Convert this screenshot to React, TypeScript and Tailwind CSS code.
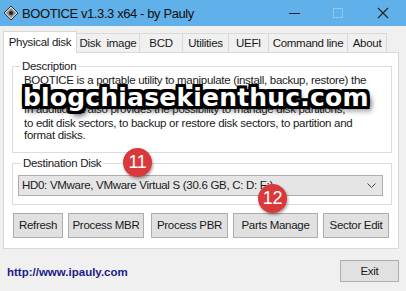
import React from 'react';

const tabs = [
  { label: 'Physical disk', w: 'w-[74px]' },
  { label: 'Disk  image', w: 'w-[64px]' },
  { label: 'BCD', w: 'w-[44px]' },
  { label: 'Utilities', w: 'w-[47px]' },
  { label: 'UEFI', w: 'w-[41px]' },
  { label: 'Command line', w: 'w-[80px]' },
  { label: 'About', w: 'w-[40px]' },
];

const buttons = [
  { label: 'Refresh', w: 'w-[50px]', ml: 'ml-0' },
  { label: 'Process MBR', w: 'w-[76px]', ml: 'ml-[5px]' },
  { label: 'Process PBR', w: 'w-[77px]', ml: 'ml-[7px]' },
  { label: 'Parts Manage', w: 'w-[85px]', ml: 'ml-[5px]' },
  { label: 'Sector Edit', w: 'w-[66px]', ml: 'ml-[5px]' },
];

function AppIcon() {
  return (
    <svg width="16" height="16" viewBox="0 0 16 16">
      <path d="M8 1 L15 8 L8 15 L1 8 Z" fill="#d8d8d8" stroke="#333" strokeWidth="1" />
      <path d="M8 3 L13 8 L8 13 L3 8 Z" fill="#8a8a8a" />
      <circle cx="8" cy="8" r="2" fill="#222" />
    </svg>
  );
}

function Badge({ n, className }: { n: string; className: string }) {
  return (
    <div
      className={`absolute flex h-[29px] w-[29px] items-center justify-center rounded-full bg-[#d9393b] font-['Liberation_Sans',sans-serif] text-[18px] text-white shadow-[1px_2px_3px_rgba(0,0,0,0.35)] ${className}`}
    >
      {n}
    </div>
  );
}

export default function App() {
  return (
    <div className="relative h-[291px] w-[406px] overflow-hidden bg-[#f0f0f0] font-['Liberation_Sans',sans-serif] text-[11.5px] leading-[13px] tracking-[-0.3px] text-[#1a1a1a]">
      {/* title bar */}
      <div className="flex h-[26px] items-center bg-[#60b0e9] pl-[3px]">
        <AppIcon />
        <span className="ml-[3px] text-[13px] tracking-[-0.4px] text-[#111]">BOOTICE v1.3.3 x64 - by Pauly</span>
        <div className="ml-auto flex h-full items-center">
          <div className="flex w-[44px] justify-center">
            <div className="h-px w-[11px] bg-[#222]" />
          </div>
          <div className="flex w-[44px] justify-center">
            <div className="h-[10px] w-[10px] border border-[#95c5e8]" />
          </div>
          <div className="flex w-[46px] justify-center">
            <svg width="12" height="12" viewBox="0 0 12 12">
              <path d="M1 1 L11 11 M11 1 L1 11" stroke="#222" strokeWidth="1.1" />
            </svg>
          </div>
        </div>
      </div>

      <div className="px-[3px]">
        {/* tabs */}
        <div className="mt-[5px] flex h-[21px] items-end">
          {tabs.map((t, i) =>
            i === 0 ? (
              <div
                key={t.label}
                className={`relative z-10 -mb-px flex h-[22px] items-center justify-center border border-b-0 border-[#d9d9d9] bg-white ${t.w}`}
              >
                {t.label}
              </div>
            ) : (
              <div
                key={t.label}
                className={`-ml-px flex h-[19px] items-center justify-center whitespace-pre border border-b-0 border-[#d9d9d9] bg-[#f0f0f0] ${t.w}`}
              >
                {t.label}
              </div>
            ),
          )}
        </div>

        {/* panel */}
        <div className="h-[197px] w-[396px] border border-[#d9d9d9] bg-white pl-[8px] pr-[6px] pt-[7px]">
          <fieldset className="h-[93px] border border-[#dcdcdc] pl-[11px] pr-[6px]">
            <legend className="-ml-[4px] px-[2px]">Description</legend>
            <p>
              <span className="block leading-[14.5px]">
                BOOTICE is a portable utility to manipulate (install, backup, restore) the
              </span>
              <span className="block leading-[14.5px]">MBR/PBR of local disks and USB disks.</span>
              <span className="block leading-[14.5px]">
                In addition, it also provides the possibility to manage disk partitions,
              </span>
              <span className="block leading-[12.7px]">
                to edit disk sectors, to backup or restore disk sectors, to partition and
              </span>
              <span className="block leading-[12.7px]">format disks.</span>
            </p>
          </fieldset>

          <fieldset className="mt-[4px] h-[48px] border border-[#dcdcdc] pl-[5px] pr-[8px]">
            <legend className="ml-[3px] px-[2px]">Destination Disk</legend>
            <div className="mt-[5px] flex h-[21px] items-center border border-[#adadad] bg-[#e5e5e5] pl-[3px] pr-[6px]">
              <span>HD0: VMware, VMware Virtual S (30.6 GB, C: D: F:)</span>
              <svg className="ml-auto" width="9" height="6" viewBox="0 0 9 6">
                <path d="M0.5 0.5 L4.5 4.5 L8.5 0.5" fill="none" stroke="#444" strokeWidth="1" />
              </svg>
            </div>
          </fieldset>

          <div className="mt-[8px] flex pl-[1px]">
            {buttons.map((b) => (
              <div
                key={b.label}
                className={`flex h-[25px] items-center justify-center border border-[#adadad] bg-[#e1e1e1] ${b.w} ${b.ml}`}
              >
                {b.label}
              </div>
            ))}
          </div>
        </div>

        {/* footer */}
        <div className="mt-[11px] flex items-center">
          <a className="ml-[4px] mt-[2px] text-[11.5px] font-bold tracking-normal text-[#1c1c8a]">
            http://www.ipauly.com
          </a>
          <div className="ml-auto mr-[4px] flex h-[22px] w-[59px] items-center justify-center border border-[#adadad] bg-[#e1e1e1]">
            Exit
          </div>
        </div>
      </div>

      {/* watermark */}
      <div className="absolute left-[23px] top-[83px] font-['DejaVu_Sans',sans-serif] text-[25px] font-bold leading-[30px] tracking-[0.2px] text-white [text-shadow:-3px_-3px_0_#000,3px_-3px_0_#000,-3px_3px_0_#000,3px_3px_0_#000,0_3px_0_#000,0_-3px_0_#000,3px_0_0_#000,-3px_0_0_#000,3px_4px_6px_#000]">
        blogchiasekienthuc.com
      </div>

      <Badge n="11" className="left-[123px] top-[148px]" />
      <Badge n="12" className="left-[258px] top-[184px]" />
    </div>
  );
}
